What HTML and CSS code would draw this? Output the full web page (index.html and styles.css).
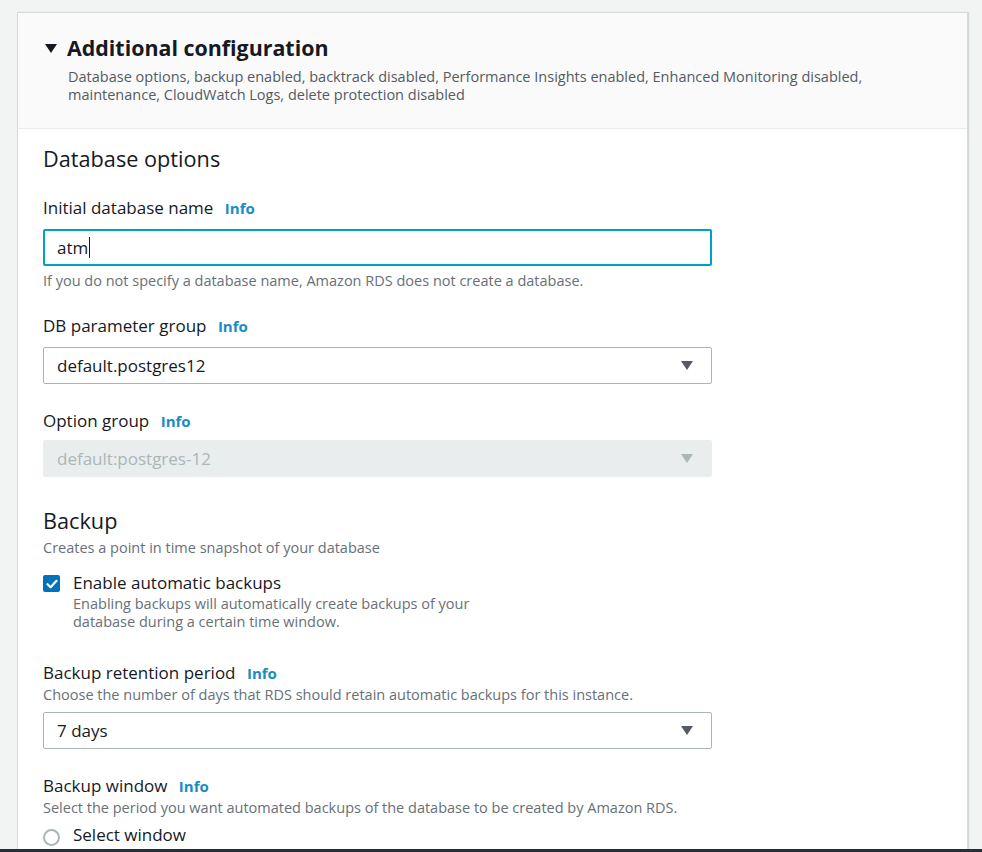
FILE: index.html
```html
<!DOCTYPE html>
<html lang="en">
<head>
<meta charset="utf-8">
<title>Additional configuration</title>
<link rel="stylesheet" href="styles.css">
</head>
<body>
<div class="page">
  <section class="card">
    <header class="card-header">
      <div class="title-row">
        <span class="caret"></span>
        <h1 class="card-title">Additional configuration</h1>
      </div>
      <p class="card-desc">Database options, backup enabled, backtrack disabled, Performance Insights enabled, Enhanced Monitoring disabled, maintenance, CloudWatch Logs, delete protection disabled</p>
    </header>
    <div class="card-body">
      <h2 class="section-title first">Database options</h2>

      <div class="field f-dbname">
        <label class="label">Initial database name <a class="info">Info</a></label>
        <div class="input focused"><span>atm</span><span class="cursor"></span></div>
        <p class="hint hint-below">If you do not specify a database name, Amazon RDS does not create a database.</p>
      </div>

      <div class="field f-param">
        <label class="label">DB parameter group <a class="info">Info</a></label>
        <div class="select"><span>default.postgres12</span><span class="arrow"></span></div>
      </div>

      <div class="field f-option">
        <label class="label">Option group <a class="info">Info</a></label>
        <div class="select disabled"><span>default:postgres-12</span><span class="arrow"></span></div>
      </div>

      <h2 class="section-title backup-title">Backup</h2>
      <p class="hint section-hint">Creates a point in time snapshot of your database</p>

      <div class="check-row">
        <span class="checkbox">
          <svg width="12" height="10" viewBox="0 0 12 10"><path d="M1.5 5.2 L4.6 8.2 L10.5 1.8" fill="none" stroke="#fff" stroke-width="2.2" stroke-linecap="round" stroke-linejoin="round"/></svg>
        </span>
        <div class="check-text">
          <div class="check-label">Enable automatic backups</div>
          <p class="check-desc">Enabling backups will automatically create backups of your<br>database during a certain time window.</p>
        </div>
      </div>

      <div class="field f-retention">
        <label class="label">Backup retention period <a class="info">Info</a></label>
        <p class="hint hint-under">Choose the number of days that RDS should retain automatic backups for this instance.</p>
        <div class="select"><span>7 days</span><span class="arrow"></span></div>
      </div>

      <div class="field f-window">
        <label class="label">Backup window <a class="info">Info</a></label>
        <p class="hint hint-under">Select the period you want automated backups of the database to be created by Amazon RDS.</p>
        <div class="radio-row">
          <span class="radio"></span>
          <span class="radio-label">Select window</span>
        </div>
      </div>
    </div>
  </section>
</div>
<div class="footer-bar"></div>
</body>
</html>
```

FILE: styles.css
```css
* { box-sizing: border-box; }

html, body {
  margin: 0;
  padding: 0;
  height: 100%;
  overflow: hidden;
}

body {
  background: #f2f3f3;
  font-family: "Open Sans", "Noto Sans", sans-serif;
  color: #16191f;
}

.page {
  padding: 12px 14px 0 17px;
}

.card {
  background: #ffffff;
  border: 1px solid #d5dbdb;
  border-bottom: none;
  box-shadow: 1px 0 1px rgba(0, 28, 36, 0.12);
  min-height: 900px;
}

.card-header {
  background: #fafafa;
  border-bottom: 1px solid #eaeded;
  padding: 21px 20px 24px 27px;
}

.title-row {
  display: flex;
  align-items: center;
  gap: 10px;
}

.caret {
  width: 0;
  height: 0;
  border-left: 6.5px solid transparent;
  border-right: 6.5px solid transparent;
  border-top: 9px solid #16191f;
  margin-top: 1px;
}

.card-title {
  margin: 0;
  font-size: 21.4px;
  line-height: 28px;
  font-weight: 700;
  color: #16191f;
}

.card-desc {
  margin: 6px 0 0 23px;
  font-size: 14.5px;
  line-height: 18px;
  color: #545b64;
  max-width: 840px;
}

.card-body {
  padding: 18px 25px 40px 25px;
}

.section-title {
  margin: 0;
  font-size: 21.7px;
  line-height: 24px;
  font-weight: 400;
  color: #16191f;
}

.label {
  display: block;
  font-size: 17px;
  line-height: 22px;
  color: #16191f;
}

.info {
  font-size: 15px;
  font-weight: 700;
  color: #1a8cc4;
  margin-left: 7px;
}

.hint {
  margin: 0;
  font-size: 14.5px;
  line-height: 20px;
  color: #687078;
}

.field { width: 669px; }

.f-dbname { margin-top: 26px; }
.f-param { margin-top: 24px; }
.f-option { margin-top: 26px; }

.input, .select {
  height: 37px;
  display: flex;
  align-items: center;
  font-size: 17px;
  color: #16191f;
  border-radius: 2px;
  margin-top: 10px;
}

.input.focused {
  border: 2px solid #00a1c9;
  padding: 0 12px;
}

.cursor {
  display: inline-block;
  width: 1px;
  height: 21px;
  background: #16191f;
  margin-left: 1px;
}

.hint-below { margin-top: 5px; }

.select {
  border: 1px solid #aab7b8;
  padding: 0 18px 0 13px;
  justify-content: space-between;
}

.select.disabled {
  background: #eaeded;
  border-color: #eaeded;
  color: #aab7b8;
  margin-top: 8px;
}

.arrow {
  width: 0;
  height: 0;
  border-left: 6px solid transparent;
  border-right: 6px solid transparent;
  border-top: 9px solid #545b64;
}

.select.disabled .arrow { border-top-color: #aab7b8; }

.backup-title { margin-top: 32px; }
.section-hint { margin-top: 5px; }

.check-row {
  display: flex;
  gap: 13px;
  margin-top: 14px;
}

.checkbox {
  flex: none;
  width: 17px;
  height: 17px;
  margin-top: 3px;
  background: #0073bb;
  border-radius: 2px;
  display: flex;
  align-items: center;
  justify-content: center;
}

.check-label {
  font-size: 17px;
  line-height: 22px;
}

.check-desc {
  margin: 1px 0 0;
  font-size: 14.5px;
  line-height: 18px;
  color: #687078;
}

.f-retention { margin-top: 31px; }
.f-window { margin-top: 26px; }

.hint-under { margin-top: 1px; }

.f-retention .select { margin-top: 7px; }

.radio-row {
  display: flex;
  align-items: flex-start;
  gap: 13px;
  margin-top: 6px;
}

.radio {
  flex: none;
  width: 17px;
  height: 17px;
  margin-top: 5px;
  border: 2px solid #aab7b8;
  border-radius: 50%;
  background: #fff;
}

.radio-label {
  font-size: 17px;
  line-height: 22px;
}

.footer-bar {
  position: fixed;
  left: 0;
  right: 0;
  bottom: 0;
  height: 3px;
  background: #232f3e;
}
```
